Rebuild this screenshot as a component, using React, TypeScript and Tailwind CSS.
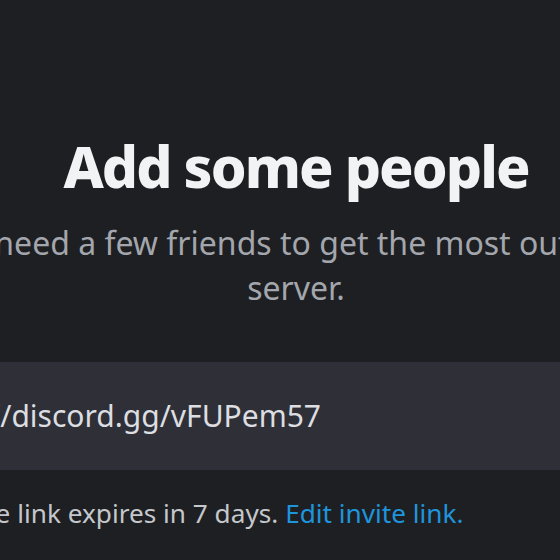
export default function App() {
  return (
    <div className="h-[560px] w-[560px] overflow-hidden bg-[#1e1f22] font-['Noto_Sans',sans-serif]">
      <div className="ml-[-150px] w-[892px] pt-[131px]">
        <h1 className="text-center text-[57px] leading-[70px] font-extrabold tracking-[-1.9px] text-[#f2f3f5]">
          Add some people
        </h1>
        <p className="mt-[19px] text-center text-[32px] leading-[45px] text-[#a3a6ad] whitespace-nowrap">
          You'll need a few friends to get the most out of your
          <br />
          server.
        </p>

        <div className="mt-[52px] ml-[30px]">
          <div className="flex h-[108px] items-center bg-[#2f3037] pl-[28px]">
            <span className="text-[30px] leading-[36px] text-[#dcdee1] whitespace-nowrap">
              https://discord.gg/vFUPem57
            </span>
          </div>
          <p className="mt-[27px] text-[26.2px] leading-[32px] text-[#c4c7cc] whitespace-nowrap">
            Your invite link expires in 7 days.{" "}
            <a className="text-[#1e94dc]">Edit invite link.</a>
          </p>
        </div>
      </div>
    </div>
  );
}
